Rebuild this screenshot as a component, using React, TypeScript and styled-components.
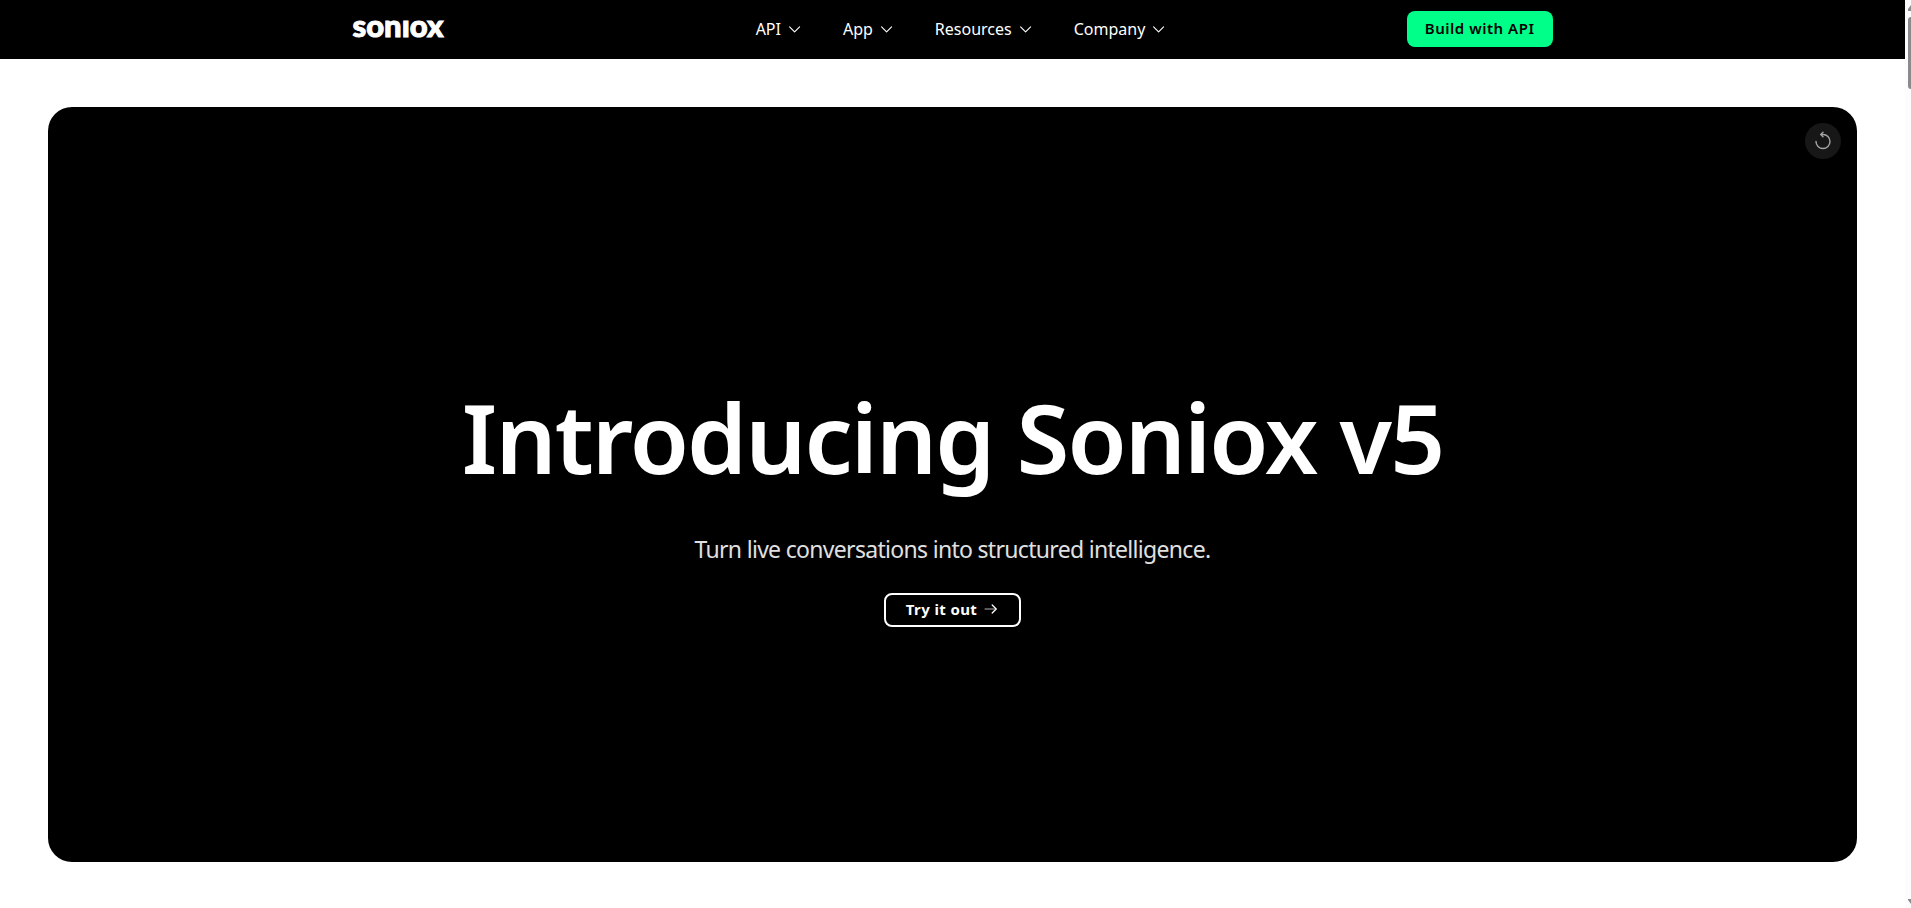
import React from "react";
import styled, { createGlobalStyle } from "styled-components";

const GlobalStyle = createGlobalStyle`
  * { box-sizing: border-box; }
  html, body { margin: 0; background: #fff; }
  body { font-family: "Noto Sans", sans-serif; font-size: 16px; line-height: 24px; }
  button { font-family: inherit; cursor: pointer; }
`;

const Shell = styled.div`
  display: flex;
  min-height: 100vh;
`;

const Page = styled.div`
  flex: 1;
  min-width: 0;
  display: flex;
  flex-direction: column;
`;

const Header = styled.header`
  height: 59px;
  padding-bottom: 1px;
  background: #000;
  color: #fff;
`;

const HeaderInner = styled.div`
  max-width: 1200px;
  height: 100%;
  margin: 0 auto;
  display: grid;
  grid-template-columns: 1fr auto 1fr;
  align-items: center;
`;

const Logo = styled.a`
  justify-self: start;
  padding-bottom: 8px;
  color: #fff;
  font-family: Lato, sans-serif;
  font-weight: 900;
  font-size: 31px;
  line-height: 32px;
  -webkit-text-stroke: 1px #fff;
  text-decoration: none;
`;

const Nav = styled.nav`
  display: flex;
  gap: 42px;
  padding-left: 16px;
`;

const NavButton = styled.button`
  display: flex;
  align-items: center;
  gap: 8px;
  padding: 0;
  border: 0;
  background: none;
  color: #fff;
  font-size: 16px;
  line-height: 24px;
`;

const BuildLink = styled.a`
  justify-self: end;
  height: 36px;
  padding: 0 18px;
  border-radius: 8px;
  background: #00ff88;
  color: #000;
  font-size: 15px;
  line-height: 34px;
  font-weight: 600;
  letter-spacing: 0.035em;
  text-decoration: none;
`;

const Main = styled.main`
  flex: 1;
  display: flex;
  padding: 48px 48px 46px;
`;

const Hero = styled.section`
  position: relative;
  flex: 1;
  display: flex;
  flex-direction: column;
  align-items: center;
  justify-content: center;
  padding-top: 34px;
  border-radius: 24px;
  background: #000;
  color: #fff;
  text-align: center;
`;

const Title = styled.h1`
  margin: 0 0 34px;
  font-size: 96px;
  line-height: 120px;
  font-weight: 600;
  letter-spacing: -0.02em;
`;

const Subtitle = styled.p`
  margin: 0 0 26px;
  color: #e0e0e0;
  font-size: 23px;
  line-height: 36px;
  letter-spacing: -0.03em;
`;

const TryLink = styled.a`
  display: flex;
  align-items: center;
  gap: 6px;
  height: 34px;
  padding: 0 20px 1px;
  border: 2px solid #fff;
  border-radius: 8px;
  color: #fff;
  font-size: 15px;
  line-height: 24px;
  font-weight: 700;
  letter-spacing: 0.025em;
  text-decoration: none;
`;

const ReplayButton = styled.button`
  position: absolute;
  top: 16px;
  right: 16px;
  width: 36px;
  height: 36px;
  display: grid;
  place-items: center;
  padding: 0;
  border: 0;
  border-radius: 50%;
  background: #171717;
  color: #a6a6a6;
`;

const ScrollRail = styled.div`
  width: 6px;
  height: 100vh;
  display: flex;
  flex-direction: column;
  align-items: flex-end;
  gap: 6px;
  overflow: hidden;
  background: #fcfcfc;
`;

const ScrollThumb = styled.div`
  width: 3px;
  height: 72px;
  border-radius: 3px 0 0 3px;
  background: #8b8b8b;
`;

const ScrollArrow = styled.svg`
  display: block;
  &:last-child { margin-top: auto; }
`;

const Chevron = () => (
  <svg width="12" height="12" viewBox="0 0 12 12" fill="none" stroke="currentColor" strokeWidth="1.1" strokeLinecap="round" strokeLinejoin="round" aria-hidden="true">
    <path d="M.6 3.8 5.6 8.8 10.6 3.8" />
  </svg>
);

const menus = ["API", "App", "Resources", "Company"];

export default function App() {
  return (
    <Shell>
      <GlobalStyle />
      <Page>
        <Header>
          <HeaderInner>
            <Logo href="#" aria-label="Soniox home">sonıox</Logo>
            <Nav>
              {menus.map((name) => (
                <NavButton key={name} type="button">
                  {name}
                  <Chevron />
                </NavButton>
              ))}
            </Nav>
            <BuildLink href="#build">Build with API</BuildLink>
          </HeaderInner>
        </Header>
        <Main>
          <Hero>
            <Title>Introducing Soniox v5</Title>
            <Subtitle>Turn live conversations into structured intelligence.</Subtitle>
            <TryLink href="#try">
              Try it out
              <svg width="16" height="10" viewBox="0 0 16 10" fill="none" stroke="currentColor" strokeLinecap="round" strokeLinejoin="round" aria-hidden="true">
                <path d="M2 5H13" opacity=".7" />
                <path d="M9.2 1 13.2 5 9.2 9" strokeWidth="1.3" />
              </svg>
            </TryLink>
            <ReplayButton type="button" aria-label="Replay">
              <svg width="18" height="20" viewBox="0 0 18 20" fill="none" stroke="currentColor" strokeWidth="1.4" strokeLinecap="round" strokeLinejoin="round" aria-hidden="true">
                <path d="M2 10.5A7 7 0 1 0 9 3.5H7" />
                <path d="M9 1.3 6.8 3.5 9 5.7" />
              </svg>
            </ReplayButton>
          </Hero>
        </Main>
      </Page>
      <ScrollRail aria-hidden="true">
        <ScrollArrow width="3" height="11" viewBox="0 0 3 11">
          <path d="M0 11V9L3 5V11Z" fill="#8b8b8b" />
        </ScrollArrow>
        <ScrollThumb />
        <ScrollArrow width="3" height="9" viewBox="0 0 3 9">
          <path d="M0 0H3V5L0 1Z" fill="#8b8b8b" />
        </ScrollArrow>
      </ScrollRail>
    </Shell>
  );
}
